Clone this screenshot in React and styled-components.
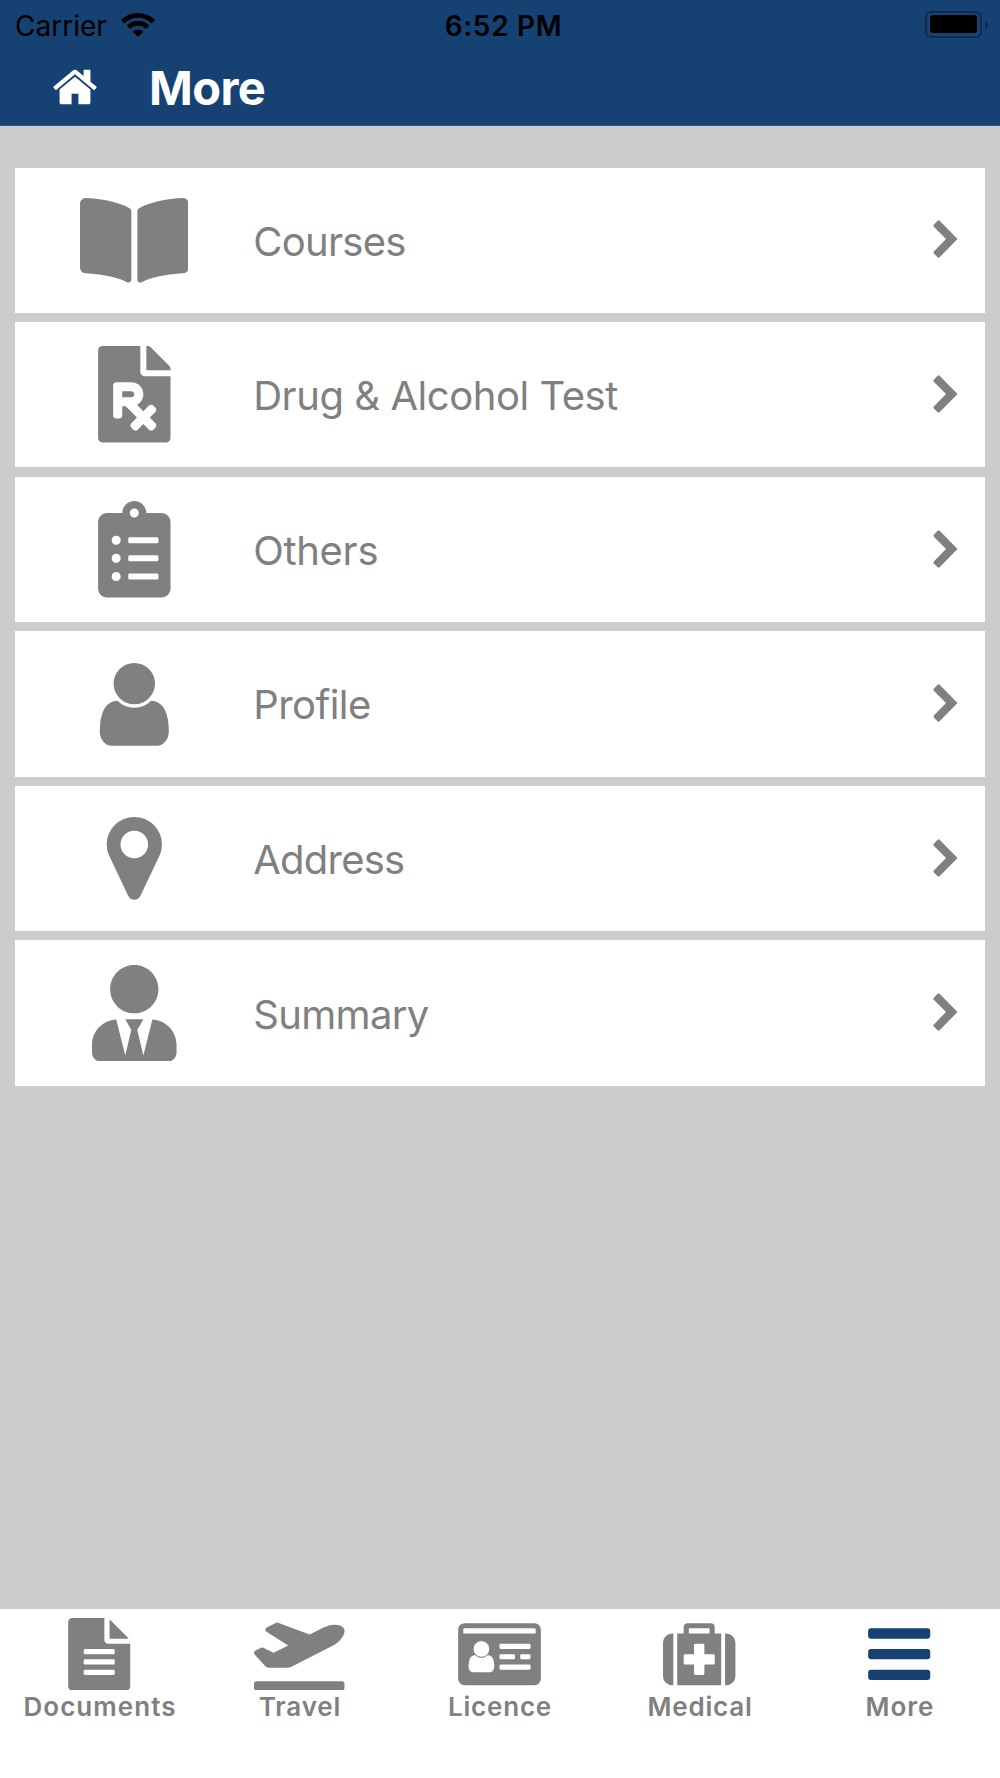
import React from 'react';
import styled, { createGlobalStyle } from 'styled-components';
import { FaBookOpen, FaFilePrescription, FaClipboardList, FaUserTie, FaPlaneDeparture } from 'react-icons/fa';

const BLUE = '#154273';
const GREY = '#808080';

const GlobalStyle = createGlobalStyle`
  * { box-sizing: border-box; }
  body { margin: 0; background: #ccc; }
`;

const Screen = styled.div`
  width: 1000px;
  height: 1778px;
  display: flex;
  flex-direction: column;
  background: #cccccc;
  color: ${GREY};
  font-family: Inter, "Liberation Sans", sans-serif;
  overflow: hidden;
`;

const Header = styled.header`
  height: 126px;
  flex: none;
  background: ${BLUE};
  border-bottom: 1px solid #2d5688;
`;

const StatusBar = styled.div`
  height: 50px;
  display: grid;
  grid-template-columns: 1fr auto 1fr;
  align-items: center;
  padding: 0 11px 0 15px;
  color: #000;
  font-size: 28px;
  line-height: 48px;
`;

const Carrier = styled.div`
  display: flex;
  align-items: center;
  gap: 12px;
`;

const Label = styled.span`
  display: block;
  white-space: nowrap;
  letter-spacing: ${(p) => p.$spacing || 0}px;
`;

const CarrierName = styled(Label)`
  width: 93px;
  padding-top: 2px;
`;

const Clock = styled(Label)`
  font-weight: 600;
  padding: 2px 0 0 3px;
`;

const Battery = styled.svg`
  justify-self: end;
`;

const TitleBar = styled.div`
  height: 74px;
  display: flex;
  align-items: center;
  padding-left: 51px;
  color: #fff;
`;

const Title = styled.h1`
  margin: 0 0 0 50px;
  font-size: 47px;
  line-height: 73px;
  font-weight: 700;
  letter-spacing: -0.6px;
`;

const List = styled.main`
  flex: 1;
  display: flex;
  flex-direction: column;
  gap: 9.4px;
  padding: 41.6px 14.8px 0 15.2px;
`;

const Row = styled.div`
  height: 145.2px;
  flex: none;
  display: flex;
  align-items: center;
  padding-right: 27px;
  background: #fff;
`;

const RowIcon = styled.div`
  width: 237.6px;
  margin-right: 0.4px;
  height: 145px;
  display: flex;
  align-items: center;
  justify-content: center;
  svg { display: block; }
`;

const RowText = styled.div`
  flex: 1;
  padding-top: 3px;
  font-size: 40px;
  line-height: 50px;
`;

const RowArrow = styled.svg`
  display: block;
  margin-bottom: 1.6px;
`;

const TabBar = styled.nav`
  height: 169.4px;
  flex: none;
  display: grid;
  grid-template-columns: repeat(5, 200px);
  background: #fff;
`;

const Tab = styled.div`
  display: flex;
  flex-direction: column;
  align-items: center;
  padding-top: 9.3px;
`;

const TabIcon = styled.div`
  height: 73px;
  margin-right: 1.2px;
  color: ${(p) => (p.$active ? BLUE : GREY)};
  svg { display: block; }
`;

const TabLabel = styled.div`
  font-size: 26px;
  line-height: 32px;
  font-weight: 600;
  white-space: nowrap;
  letter-spacing: ${(p) => p.$spacing}px;
`;

const Glyph = ({ size, d }) => (
  <svg width={size} height={size} viewBox="0 0 1792 1792" fill="currentColor"><path d={d} /></svg>
);

const HOME = 'M1472 992v480q0 26-19 45t-45 19h-384v-384h-256v384h-384q-26 0-45-19t-19-45v-480q0-1 .5-3t.5-3l575-474 575 474q1 2 1 6zm223-69l-62 74q-8 9-21 11h-3q-13 0-21-7l-692-577-692 577q-12 8-24 7-13-2-21-11l-62-74q-8-10-7-23.5t11-21.5l719-599q32-26 76-26t76 26l244 204v-195q0-14 9-23t23-9h192q14 0 23 9t9 23v408l219 182q10 8 11 21.5t-7 23.5z';
const USER = 'M1536 1399q0 109-62.5 187t-150.5 78h-854q-88 0-150.5-78t-62.5-187q0-85 8.5-160.5t31.5-152 58.5-131 94-89 134.5-34.5q131 128 313 128t313-128q76 0 134.5 34.5t94 89 58.5 131 31.5 152 8.5 160.5zm-256-887q0 159-112.5 271.5t-271.5 112.5-271.5-112.5-112.5-271.5 112.5-271.5 271.5-112.5 271.5 112.5 112.5 271.5z';
const MARKER = 'M1152 640q0-106-75-181t-181-75-181 75-75 181 75 181 181 75 181-75 75-181zm256 0q0 109-33 179l-364 774q-16 33-47.5 52t-67.5 19-67.5-19-46.5-52l-365-774q-33-70-33-179 0-212 150-362t362-150 362 150 150 362z';
const FILE = 'M1596 476q14 14 28 36h-472v-472q22 14 36 28zm-476 164h544v1056q0 40-28 68t-68 28h-1344q-40 0-68-28t-28-68v-1600q0-40 28-68t68-28h800v544q0 40 28 68t68 28zm160 736v-64q0-14-9-23t-23-9h-704q-14 0-23 9t-9 23v64q0 14 9 23t23 9h704q14 0 23-9t9-23zm0-256v-64q0-14-9-23t-23-9h-704q-14 0-23 9t-9 23v64q0 14 9 23t23 9h704q14 0 23-9t9-23zm0-256v-64q0-14-9-23t-23-9h-704q-14 0-23 9t-9 23v64q0 14 9 23t23 9h704q14 0 23-9t9-23z';
const MEDKIT = 'M1280 1120v-192q0-14-9-23t-23-9h-224v-224q0-14-9-23t-23-9h-192q-14 0-23 9t-9 23v224h-224q-14 0-23 9t-9 23v192q0 14 9 23t23 9h224v224q0 14 9 23t23 9h192q14 0 23-9t9-23v-224h224q14 0 23-9t9-23zm-640-736h512v-128h-512v128zm-384 0v1280h-32q-92 0-158-66t-66-158v-832q0-92 66-158t158-66h32zm1184 0v1280h-1088v-1280h160v-160q0-40 28-68t68-28h576q40 0 68 28t28 68v160h160zm352 224v832q0 92-66 158t-158 66h-32v-1280h32q92 0 158 66t66 158z';
const BARS = 'M1664 1344v128q0 26-19 45t-45 19h-1408q-26 0-45-19t-19-45v-128q0-26 19-45t45-19h1408q26 0 45 19t19 45zm0-512v128q0 26-19 45t-45 19h-1408q-26 0-45-19t-19-45v-128q0-26 19-45t45-19h1408q26 0 45 19t19 45zm0-512v128q0 26-19 45t-45 19h-1408q-26 0-45-19t-19-45v-128q0-26 19-45t45-19h1408q26 0 45 19t19 45z';

const IdCard = () => (
  <svg width="83" height="72.4" viewBox="0 0 2048 1792">
    <rect y="128" width="2048" height="1536" rx="160" fill="currentColor" />
    <g fill="#fff">
      <path d="M128 384v-96q0-32 32-32h1728q32 0 32 32v96z" />
      <path d="M896 1196q0 55-31 105t-76 43H363q-45 0-76-43t-31-105q0-110 33-190t131-93q64 64 156 64t156-64q98 13 131 93t33 190z" />
      <circle cx="576" cy="768" r="206" stroke="currentColor" strokeWidth="24" />
      <rect x="1024" y="640" width="768" height="128" rx="32" />
      <rect x="1024" y="896" width="384" height="128" rx="32" />
      <rect x="1536" y="896" width="256" height="128" rx="32" />
      <rect x="1024" y="1152" width="768" height="128" rx="32" />
    </g>
  </svg>
);

const Chevron = () => (
  <RowArrow width="26" height="40" viewBox="0 0 26 40" fill="currentColor">
    <path d="M1.8 5.7 5.6 1.7Q6.6 .9 7.6 1.7L25.5 20 7.6 38.3Q6.6 39.1 5.6 38.3L1.8 34.4Q1 33.4 1.8 32.4L14 20 1.8 7.7Q1 6.7 1.8 5.7z" />
  </RowArrow>
);

const Wifi = () => (
  <svg width="36" height="26" viewBox="0 0 36 26">
    <path
      d="M2.7 9.7A21.6 21.6 0 0 1 33.3 9.7M8.3 15.3A13.7 13.7 0 0 1 27.7 15.3"
      fill="none" stroke="#000" strokeWidth="4.9"
    />
    <path d="M12.7 19.7A7.5 7.5 0 0 1 23.3 19.7L18 25z" />
  </svg>
);

const rows = [
  { text: 'Courses', spacing: -0.7, icon: <FaBookOpen size={96.6} style={{ width: 108.7 }} /> },
  { text: 'Drug & Alcohol Test', spacing: -0.45, icon: <FaFilePrescription size={96.6} /> },
  { text: 'Others', spacing: -0.3, icon: <FaClipboardList size={96.6} /> },
  { text: 'Profile', spacing: -0.55, icon: <Glyph size={96.6} d={USER} /> },
  { text: 'Address', spacing: -0.75, icon: <Glyph size={96.6} d={MARKER} /> },
  { text: 'Summary', spacing: -0.65, icon: <FaUserTie size={96.6} /> },
];

const tabs = [
  { text: 'Documents', spacing: 1.05, icon: <Glyph size={72.4} d={FILE} /> },
  { text: 'Travel', spacing: 0.85, icon: <FaPlaneDeparture size={72.4} style={{ width: 90.5 }} /> },
  { text: 'Licence', spacing: 0.8, icon: <IdCard /> },
  { text: 'Medical', spacing: 0.8, icon: <Glyph size={72.4} d={MEDKIT} /> },
  { text: 'More', spacing: 1, active: true, icon: <Glyph size={72.4} d={BARS} /> },
];

export default function App() {
  return (
    <Screen>
      <GlobalStyle />
      <Header>
        <StatusBar>
          <Carrier><CarrierName>Carrier</CarrierName><Wifi /></Carrier>
          <Clock $spacing={0.7}>6:52 PM</Clock>
          <Battery width="64" height="28" viewBox="0 0 64 28">
            <rect x="1" y="1" width="55" height="25" rx="5" fill="none" stroke="#0e2b4c" strokeWidth="2" />
            <rect x="5" y="4" width="47" height="18" rx="3" />
            <path d="M60 9q3 2 3 5t-3 5z" fill="#0e2b4c" />
          </Battery>
        </StatusBar>
        <TitleBar><Glyph size={48} d={HOME} /><Title>More</Title></TitleBar>
      </Header>
      <List>
        {rows.map((r) => (
          <Row key={r.text}>
            <RowIcon>{r.icon}</RowIcon>
            <RowText><Label $spacing={r.spacing}>{r.text}</Label></RowText>
            <Chevron />
          </Row>
        ))}
      </List>
      <TabBar>
        {tabs.map((t) => (
          <Tab key={t.text}>
            <TabIcon $active={t.active}>{t.icon}</TabIcon>
            <TabLabel $spacing={t.spacing}>{t.text}</TabLabel>
          </Tab>
        ))}
      </TabBar>
    </Screen>
  );
}
